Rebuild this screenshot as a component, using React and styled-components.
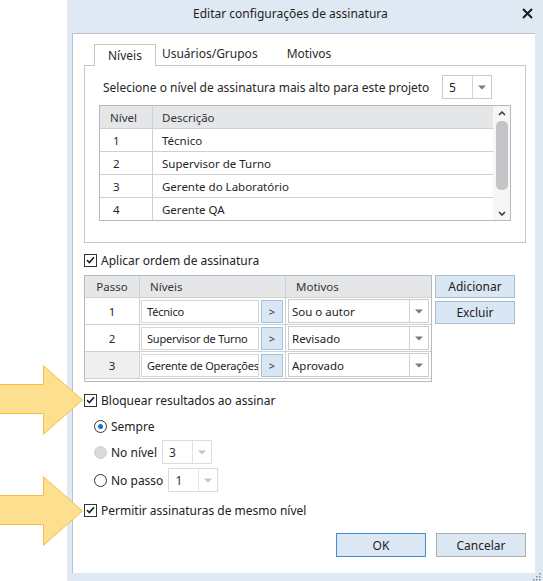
import React from "react";
import styled, { createGlobalStyle } from "styled-components";

const GlobalStyle = createGlobalStyle`
  html, body {
    margin: 0;
    padding: 0;
    background: #fff;
  }
  body {
    font-family: "Noto Sans", "Open Sans", sans-serif;
    font-size: 11.5px;
    color: #262626;
  }
  * {
    box-sizing: border-box;
  }
`;

const levels = [
    { id: 1, name: "Técnico" },
    { id: 2, name: "Supervisor de Turno" },
    { id: 3, name: "Gerente do Laboratório" },
    { id: 4, name: "Gerente QA" },
];

const steps = [
    { step: 1, level: "Técnico", reason: "Sou o autor" },
    { step: 2, level: "Supervisor de Turno", reason: "Revisado" },
    { step: 3, level: "Gerente de Operações", reason: "Aprovado", selected: true },
];

function CheckIcon() {
    return (
        <svg width="9" height="8" viewBox="0 0 9 8">
            <path d="M1 4.2 L3.4 6.5 L8 1.3" fill="none" stroke="#222" strokeWidth="1.7" />
        </svg>
    );
}

function DropArrow({ disabled }) {
    return (
        <svg width="8" height="5" viewBox="0 0 8 5">
            <polygon points="0,0.5 8,0.5 4,4.5" fill={disabled ? "#c4c4c4" : "#7a7a7a"} />
        </svg>
    );
}

function Combo({ value, width, valueWidth, disabled }) {
    return (
        <ComboBox $width={width} $disabled={disabled}>
            <ComboValue $width={valueWidth}>{value}</ComboValue>
            <ComboArrow $disabled={disabled}>
                <DropArrow disabled={disabled} />
            </ComboArrow>
        </ComboBox>
    );
}

function Check({ label }) {
    return (
        <CheckRow>
            <CheckBox>
                <CheckIcon />
            </CheckBox>
            <span>{label}</span>
        </CheckRow>
    );
}

function Arrow({ top }) {
    return (
        <ArrowMark style={{ top }} width="86" height="72" viewBox="0 0 86 72">
            <polygon
                points="-1,19.5 43.5,19.5 43.5,0.8 82.5,35 43.5,69.2 43.5,48.5 -1,48.5"
                fill="#fde08f"
                stroke="#f7bd3e"
                strokeWidth="1"
            />
        </ArrowMark>
    );
}

export default function App() {
    return (
        <Page>
            <GlobalStyle />
            <Dialog>
                <TitleBar>
                    <Title>Editar configurações de assinatura</Title>
                    <CloseButton>
                        <svg width="11" height="11" viewBox="0 0 11 11">
                            <path d="M1 1 L10 10 M10 1 L1 10" stroke="#1b1b1b" strokeWidth="2" />
                        </svg>
                    </CloseButton>
                </TitleBar>
                <Body>
                    <TabList>
                        <Tab $active $pad="0 13px">Níveis</Tab>
                        <Tab $pad="0 14px 0 5px">Usuários/Grupos</Tab>
                        <Tab $pad="0 13px">Motivos</Tab>
                    </TabList>
                    <TabPanel>
                        <TopLevelRow>
                            <span>Selecione o nível de assinatura mais alto para este projeto</span>
                            <Combo value="5" width={50} valueWidth={29} />
                        </TopLevelRow>
                        <LevelsGrid>
                            <GridBody>
                                <GridRow $head>
                                    <GridCell $pad={10}>Nível</GridCell>
                                    <GridCell $pad={9} $last>
                                        Descrição
                                    </GridCell>
                                </GridRow>
                                {levels.map((level) => (
                                    <GridRow key={level.id}>
                                        <GridCell $pad={13}>{level.id}</GridCell>
                                        <GridCell $pad={9} $last>
                                            {level.name}
                                        </GridCell>
                                    </GridRow>
                                ))}
                            </GridBody>
                            <ScrollBar>
                                <ScrollArrow>
                                    <svg width="8" height="5" viewBox="0 0 8 5">
                                        <path d="M1 4 L4 1 L7 4" fill="none" stroke="#333" strokeWidth="1.5" />
                                    </svg>
                                </ScrollArrow>
                                <ScrollThumb />
                                <ScrollSpacer />
                                <ScrollArrow>
                                    <svg width="8" height="5" viewBox="0 0 8 5">
                                        <path d="M1 1 L4 4 L7 1" fill="none" stroke="#333" strokeWidth="1.5" />
                                    </svg>
                                </ScrollArrow>
                            </ScrollBar>
                        </LevelsGrid>
                    </TabPanel>

                    <Section $top={9}>
                        <Check label="Aplicar ordem de assinatura" />
                    </Section>

                    <StepsRow>
                        <StepsTable>
                            <StepsHead>
                                <StepsCell $center>Passo</StepsCell>
                                <StepsCell $pad={10}>Níveis</StepsCell>
                                <StepsCell $pad={10} $last>
                                    Motivos
                                </StepsCell>
                            </StepsHead>
                            {steps.map((row) => (
                                <StepsLine key={row.step}>
                                    <StepsCell $center $shade={row.selected}>
                                        {row.step}
                                    </StepsCell>
                                    <StepsCell $pad={1}>
                                        <LevelBox>{row.level}</LevelBox>
                                        <PickButton>&gt;</PickButton>
                                    </StepsCell>
                                    <StepsCell $pad={2} $last>
                                        <Combo value={row.reason} width={141} valueWidth={120} />
                                    </StepsCell>
                                </StepsLine>
                            ))}
                        </StepsTable>
                        <SideButtons>
                            <SideButton>Adicionar</SideButton>
                            <SideButton>Excluir</SideButton>
                        </SideButtons>
                    </StepsRow>

                    <Section $top={10}>
                        <Check label="Bloquear resultados ao assinar" />
                    </Section>

                    <RadioGroup>
                        <RadioRow $top={6}>
                            <Radio $checked />
                            <RadioLabel>Sempre</RadioLabel>
                        </RadioRow>
                        <RadioRow $top={2}>
                            <Radio $disabled />
                            <RadioLabel>No nível</RadioLabel>
                            <ComboSlot>
                                <Combo value="3" width={50} valueWidth={29} disabled />
                            </ComboSlot>
                        </RadioRow>
                        <RadioRow $top={4}>
                            <Radio />
                            <RadioLabel>No passo</RadioLabel>
                            <ComboSlot>
                                <Combo value="1" width={50} valueWidth={29} disabled />
                            </ComboSlot>
                        </RadioRow>
                    </RadioGroup>

                    <Section $top={10}>
                        <Check label="Permitir assinaturas de mesmo nível" />
                    </Section>

                    <FooterButtons>
                        <DialogButton $primary>OK</DialogButton>
                        <DialogButton>Cancelar</DialogButton>
                    </FooterButtons>
                </Body>
                <Grip width="10" height="10" viewBox="0 0 10 10">
                    {[
                        [8, 2],
                        [5, 5],
                        [8, 5],
                        [2, 8],
                        [5, 8],
                        [8, 8],
                    ].map(([x, y]) => (
                        <rect key={`${x}-${y}`} x={x} y={y} width="1.5" height="1.5" fill="#7d8a99" />
                    ))}
                </Grip>
            </Dialog>
            <Arrow top={365} />
            <Arrow top={476} />
        </Page>
    );
}

const Page = styled.div`
    position: relative;
    display: flex;
    width: 543px;
    height: 581px;
    overflow: hidden;
    background: #fff;
`;

const Dialog = styled.div`
    position: relative;
    margin-left: 67px;
    flex: 1;
    display: flex;
    flex-direction: column;
    background: #dfe9f3;
    padding: 0 8px 8px 5px;
`;

const TitleBar = styled.div`
    height: 33px;
    display: flex;
    align-items: center;
    padding-left: 121px;
    padding-bottom: 7px;
`;

const Title = styled.div`
    font-size: 12px;
    color: #1e1e1e;
`;

const CloseButton = styled.div`
    margin-left: auto;
    margin-right: 2px;
    display: flex;
    align-items: center;
`;

const Body = styled.div`
    flex: 1;
    display: flex;
    flex-direction: column;
    background: #fff;
    border-top: 1px solid #b9c3cd;
    border-left: 1px solid #b9c3cd;
    padding: 10px 9px 0 11px;
`;

const TabList = styled.div`
    display: flex;
    align-items: flex-end;
    height: 22px;
    padding-left: 10px;
    margin-bottom: -1px;
    position: relative;
    z-index: 1;
`;

const Tab = styled.div`
    height: 22px;
    padding: ${(props) => props.$pad};
    padding-top: ${(props) => (props.$active ? "3px" : "1px")};
    line-height: 16px;
    font-size: 12px;
    color: #2a2a2a;
    background: ${(props) => (props.$active ? "#fff" : "transparent")};
    border: 1px solid ${(props) => (props.$active ? "#c6c6c6" : "transparent")};
    border-bottom: none;
`;

const TabPanel = styled.div`
    height: 178px;
    border: 1px solid #c6c6c6;
    padding: 9px 14px 0 14px;
    display: flex;
    flex-direction: column;
`;

const TopLevelRow = styled.div`
    height: 24px;
    display: flex;
    align-items: center;
    padding-left: 4px;
    font-size: 12px;

    & > :last-child {
        margin-left: auto;
        margin-right: 19px;
    }
`;

const ComboBox = styled.div`
    width: ${(props) => props.$width}px;
    height: 24px;
    display: flex;
    background: #fff;
    border: 1px solid ${(props) => (props.$disabled ? "#dcdcdc" : "#cbcbcb")};
    color: ${(props) => (props.$disabled ? "#333" : "#222")};
`;

const ComboValue = styled.div`
    width: ${(props) => props.$width}px;
    display: flex;
    align-items: center;
    padding-left: ${(props) => (props.$width < 40 ? "6px" : "3px")};
    white-space: nowrap;
`;

const ComboArrow = styled.div`
    flex: 1;
    display: flex;
    align-items: center;
    justify-content: center;
    border-left: 1px solid ${(props) => (props.$disabled ? "#e2e2e2" : "#d4d4d4")};
`;

const LevelsGrid = styled.div`
    margin-top: 6px;
    height: 116px;
    display: flex;
    border: 1px solid #b4babf;
`;

const GridBody = styled.div`
    flex: 1;
    display: flex;
    flex-direction: column;
`;

const GridRow = styled.div`
    display: grid;
    grid-template-columns: 53px 1fr;
    height: 23px;
    flex-shrink: 0;
    background: ${(props) => (props.$head ? "#e4e6e8" : "#fff")};
    border-bottom: 1px solid #ccd1d5;
    color: ${(props) => (props.$head ? "#333" : "#262626")};

    &:last-child {
        border-bottom: none;
        height: 22px;
    }
`;

const GridCell = styled.div`
    display: flex;
    align-items: center;
    padding-left: ${(props) => props.$pad}px;
    border-right: ${(props) => (props.$last ? "none" : "1px solid #ccd1d5")};
    white-space: nowrap;
`;

const ScrollBar = styled.div`
    width: 17px;
    display: flex;
    flex-direction: column;
    align-items: center;
    background: #f6f6f6;
`;

const ScrollArrow = styled.div`
    height: 14px;
    display: flex;
    align-items: center;
    justify-content: center;
`;

const ScrollThumb = styled.div`
    width: 12px;
    height: 69px;
    margin-top: 1px;
    border-radius: 5px;
    background: #c3c5c7;
`;

const ScrollSpacer = styled.div`
    flex: 1;
`;

const Section = styled.div`
    margin-top: ${(props) => props.$top}px;
`;

const CheckRow = styled.div`
    height: 16px;
    display: flex;
    align-items: center;
    gap: 4px;
    font-size: 12px;
    color: #222;
`;

const CheckBox = styled.div`
    width: 13px;
    height: 13px;
    display: flex;
    align-items: center;
    justify-content: center;
    border: 1px solid #333;
    background: #fff;
`;

const StepsRow = styled.div`
    margin-top: 7px;
    display: flex;
    align-items: flex-start;
    gap: 3px;
`;

const StepsTable = styled.div`
    width: 348px;
    height: 107px;
    border: 1px solid #b4babf;
`;

const StepsHead = styled.div`
    display: grid;
    grid-template-columns: 55px 146px 1fr;
    height: 22px;
    background: #e4e6e8;
    border-bottom: 1px solid #ccd1d5;
    color: #333;
`;

const StepsLine = styled.div`
    display: grid;
    grid-template-columns: 55px 146px 1fr;
    height: 27px;
    border-bottom: 1px solid #ccd1d5;
`;

const StepsCell = styled.div`
    display: flex;
    align-items: center;
    justify-content: ${(props) => (props.$center ? "center" : "flex-start")};
    padding-left: ${(props) => props.$pad || 0}px;
    gap: 2px;
    background: ${(props) => (props.$shade ? "#efefef" : "transparent")};
    border-right: ${(props) => (props.$last ? "none" : "1px solid #ccd1d5")};
    white-space: nowrap;
`;

const LevelBox = styled.div`
    width: 118px;
    height: 23px;
    display: flex;
    align-items: center;
    padding-left: 5px;
    border: 1px solid #d6d6d6;
    background: #fff;
    color: #1e1e1e;
    font-size: 11px;
    letter-spacing: -0.2px;
    overflow: hidden;
`;

const PickButton = styled.div`
    width: 22px;
    height: 23px;
    display: flex;
    align-items: center;
    justify-content: center;
    background: #d7e7f5;
    border: 1px solid #a9c1d8;
    font-size: 11px;
    color: #333;
`;

const SideButtons = styled.div`
    display: flex;
    flex-direction: column;
    gap: 3px;
`;

const SideButton = styled.div`
    width: 80px;
    height: 23px;
    display: flex;
    align-items: center;
    justify-content: center;
    background: #d9e7f4;
    border: 1px solid #a8bdd2;
    font-size: 12px;
    color: #222;
`;

const RadioGroup = styled.div`
    display: flex;
    flex-direction: column;
    padding-left: 10px;
`;

const RadioRow = styled.div`
    margin-top: ${(props) => props.$top}px;
    height: 24px;
    display: flex;
    align-items: center;
    font-size: 12px;
    color: #222;
`;

const Radio = styled.div`
    width: 13px;
    height: 13px;
    border-radius: 50%;
    display: flex;
    align-items: center;
    justify-content: center;
    border: 1px solid ${(props) => (props.$disabled ? "#cfcfcf" : "#333")};
    background: ${(props) => (props.$disabled ? "#dadada" : "#fff")};

    &::after {
        content: "";
        display: ${(props) => (props.$checked ? "block" : "none")};
        width: 5px;
        height: 5px;
        border-radius: 50%;
        background: #0a74d8;
    }
`;

const RadioLabel = styled.span`
    margin-left: 4px;
`;

const ComboSlot = styled.div`
    margin-left: 5px;
`;

const FooterButtons = styled.div`
    margin-top: 15px;
    display: flex;
    justify-content: flex-end;
    gap: 10px;
`;

const DialogButton = styled.div`
    width: 90px;
    height: 24px;
    display: flex;
    align-items: center;
    justify-content: center;
    background: #dbe8f4;
    border: 1px solid ${(props) => (props.$primary ? "#3d8fdb" : "#adadad")};
    font-size: 12px;
    color: #222;
`;

const Grip = styled.svg`
    position: absolute;
    right: 2px;
    bottom: 0;
`;

const ArrowMark = styled.svg`
    position: absolute;
    left: 0;
`;
